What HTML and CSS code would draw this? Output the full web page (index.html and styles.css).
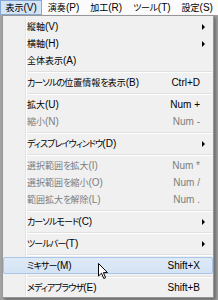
FILE: index.html
```html
<!DOCTYPE html>
<html lang="ja">
<head>
<meta charset="utf-8">
<link rel="stylesheet" href="styles.css">
</head>
<body>
<div class="menubar">
  <span class="mb-item active">表示<span class="mn">(V)</span></span>
  <span class="mb-item">演奏<span class="mn">(P)</span></span>
  <span class="mb-item">加工<span class="mn">(R)</span></span>
  <span class="mb-item"><span class="kn-bar">ツール</span><span class="mn">(T)</span></span>
  <span class="mb-item">設定<span class="mn">(S)</span></span>
</div>
<div class="desktop">
  <div class="menu">
    <div class="item"><span class="label">縦軸<span class="mn">(V)</span></span><span class="key"></span><span class="sub"><i class="tri"></i></span></div>
    <div class="item"><span class="label">横軸<span class="mn">(H)</span></span><span class="key"></span><span class="sub"><i class="tri"></i></span></div>
    <div class="item"><span class="label">全体表示<span class="mn">(A)</span></span><span class="key"></span><span class="sub"></span></div>
    <div class="sep"></div>
    <div class="item"><span class="label"><span class="kn">カーソルの</span>位置情報<span class="kn">を</span>表示<span class="mn">(B)</span></span><span class="key">Ctrl+D</span><span class="sub"></span></div>
    <div class="sep"></div>
    <div class="item"><span class="label">拡大<span class="mn">(U)</span></span><span class="key">Num +</span><span class="sub"></span></div>
    <div class="item disabled"><span class="label">縮小<span class="mn">(N)</span></span><span class="key">Num -</span><span class="sub"></span></div>
    <div class="sep"></div>
    <div class="item"><span class="label"><span class="kn">ディスプレイウィンドウ</span><span class="mn">(D)</span></span><span class="key"></span><span class="sub"><i class="tri"></i></span></div>
    <div class="sep"></div>
    <div class="item disabled"><span class="label">選択範囲<span class="kn">を</span>拡大<span class="mn">(I)</span></span><span class="key">Num *</span><span class="sub"></span></div>
    <div class="item disabled"><span class="label">選択範囲<span class="kn">を</span>縮小<span class="mn">(O)</span></span><span class="key">Num /</span><span class="sub"></span></div>
    <div class="item disabled"><span class="label">範囲拡大<span class="kn">を</span>解除<span class="mn">(L)</span></span><span class="key">Num .</span><span class="sub"></span></div>
    <div class="sep"></div>
    <div class="item"><span class="label"><span class="kn">カーソルモード</span><span class="mn">(C)</span></span><span class="key"></span><span class="sub"><i class="tri"></i></span></div>
    <div class="sep"></div>
    <div class="item"><span class="label"><span class="kn">ツールバー</span><span class="mn">(T)</span></span><span class="key"></span><span class="sub"><i class="tri"></i></span></div>
    <div class="sep"></div>
    <div class="item hover"><span class="label"><span class="kn">ミキサー</span><span class="mn">(M)</span></span><span class="key">Shift+X</span><span class="sub"></span>
      <svg class="cursor" width="12" height="17" viewBox="0 0 12 17"><path d="M0.5 0.5 L0.5 13 L3.5 10.2 L5.8 15.5 L7.6 14.7 L5.4 9.6 L9.5 9.6 Z" fill="#fff" stroke="#000" stroke-width="1" stroke-linejoin="round"/></svg>
    </div>
    <div class="sep"></div>
    <div class="item"><span class="label"><span class="kn">メディアブラウザ</span><span class="mn">(E)</span></span><span class="key">Shift+B</span><span class="sub"></span></div>
  </div>
</div>
</body>
</html>
```
FILE: styles.css
```css
html, body {
  margin: 0;
  padding: 0;
}
body {
  width: 218px;
  height: 300px;
  overflow: hidden;
  background: #a3a3a3;
  font-family: "Liberation Sans", "Noto Sans CJK JP", sans-serif;
  font-size: 10px;
  color: #000;
}
.menubar {
  display: flex;
  height: 15px;
  background: #fbfbfb;
}
.mb-item,
.label {
  font-size: 9px;
  font-feature-settings: "palt";
}
.kn {
  letter-spacing: -0.9px;
}
.kn-bar {
  letter-spacing: -0.3px;
}
.mn {
  font-size: 10px;
  letter-spacing: 0;
}
.mb-item {
  display: flex;
  align-items: center;
  flex-shrink: 0;
  white-space: nowrap;
  padding: 0 5.5px;
  height: 15px;
  box-sizing: border-box;
}
.mb-item.active {
  background: #d3e4f6;
  box-shadow: inset 0 0 0 1px #88a9d3;
}
.desktop {
  height: 285px;
  padding-left: 2px;
}
.menu {
  width: 212px;
  box-sizing: border-box;
  border: 1px solid #979797;
  padding: 2px 0 1px 0;
  background:
    linear-gradient(to right, transparent 22px, #e2e3e3 22px, #e2e3e3 23px, #ffffff 23px, #ffffff 24px, transparent 24px),
    #f0f0f0;
  box-shadow: 2px 2px 3px rgba(0, 0, 0, 0.35);
}
.item {
  position: relative;
  display: flex;
  align-items: center;
  height: 17px;
  padding-left: 24px;
  white-space: nowrap;
}
.item .label {
  flex: 1;
}
.item .key {
  text-align: right;
}
.item .sub {
  width: 13px;
  display: flex;
  align-items: center;
  padding-left: 2px;
  box-sizing: border-box;
}
.tri {
  display: block;
  width: 0;
  height: 0;
  border-left: 3px solid #000;
  border-top: 3px solid transparent;
  border-bottom: 3px solid transparent;
}
.item.disabled {
  color: #7d7d7d;
}
.item.hover {
  background: linear-gradient(#dfeaf7, #d3e3f5);
  box-shadow: inset 0 0 0 1px #a9c6e8;
  border-radius: 2px;
}
.sep {
  height: 5px;
  margin-left: 25px;
  margin-right: 1px;
  background: linear-gradient(transparent 2px, #e0e0e0 2px, #e0e0e0 3px, #ffffff 3px, #ffffff 4px, transparent 4px);
}
.cursor {
  position: absolute;
  left: 95px;
  top: 6px;
}
```
